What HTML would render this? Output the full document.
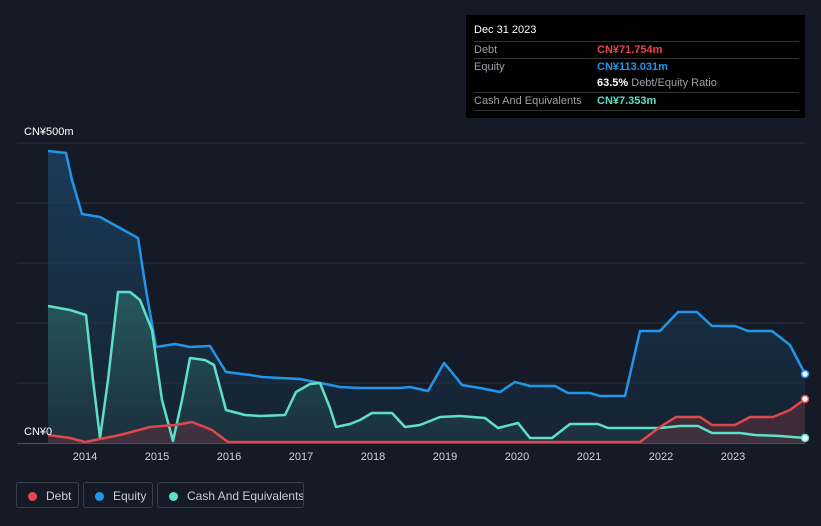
<!DOCTYPE html>
<html><head><meta charset="utf-8"><style>
body{margin:0;background:#151b26;width:821px;height:526px;overflow:hidden;font-family:"Liberation Sans",sans-serif;position:relative}
.tip{position:absolute;left:466px;top:15px;width:339px;height:103px;background:#000;color:#fff;font-size:11px}
.tip .r{position:absolute;left:8px;right:6px;border-top:1px solid #333;height:17px;line-height:17px;color:#9aa0a6}
.tip .v{position:absolute;left:123px;font-weight:bold}
.leg{position:absolute;top:482px;height:26px;border:1px solid #3a404a;border-radius:3px;color:#c8ccd2;font-size:12px;line-height:26px;box-sizing:border-box;white-space:nowrap;overflow:hidden}
.leg i{display:inline-block;width:9px;height:9px;border-radius:50%;margin:0 9px 0 11px;vertical-align:-1px}
</style></head><body>
<svg width="821" height="526" style="position:absolute;left:0;top:0">
<defs>
<linearGradient id="ge" x1="0" y1="0" x2="0" y2="1"><stop offset="0" stop-color="#1b4466" stop-opacity=".8"/><stop offset="1" stop-color="#16283a" stop-opacity=".6"/></linearGradient>
<linearGradient id="gc" x1="0" y1="0" x2="0" y2="1"><stop offset="0" stop-color="#2e6a6a" stop-opacity=".7"/><stop offset="1" stop-color="#1e3a44" stop-opacity=".6"/></linearGradient>
</defs>
<g stroke="#2a313c" stroke-width="1">
<line x1="17" y1="143" x2="805" y2="143"/><line x1="17" y1="203" x2="805" y2="203"/><line x1="17" y1="263" x2="805" y2="263"/><line x1="17" y1="323" x2="805" y2="323"/><line x1="17" y1="383" x2="805" y2="383"/>
</g>
<polygon fill="url(#ge)" points="48,443 48,151 66,153 72,180 82,214 100,217 120,228 138,238 146,290 156,347 175,344 190,347 210,346 226,372 250,375 262,377 300,379 320,383 340,387 360,388 400,388 410,387 428,391 444,363 450,370 462,385 480,388 500,392 515,382 530,386 555,386 568,393 590,393 600,396 625,396 640,331 660,331 678,312 697,312 712,326 735,326 748,331 772,331 790,345 805,374 805,443"/>
<polygon fill="url(#gc)" points="48,443 48,306 70,310 86,315 93,380 100,438 108,380 118,292 130,292 140,300 152,330 162,400 173,441 182,400 190,358 205,360 214,365 226,410 245,415 260,416 285,415 296,392 310,384 320,383 330,408 336,427 350,424 360,420 372,413 392,413 405,427 420,425 440,417 460,416 485,418 498,428 518,423 530,438 552,438 570,424 598,424 608,428 640,428 660,428 680,426 698,426 712,433 740,433 755,435 780,436 805,438 805,443"/>
<polygon fill="#5a3040" opacity=".6" points="48,443 48,435 70,438 85,442 100,439 120,435 150,427 175,425 192,422 212,430 228,442 640,442 660,427 676,417 700,417 712,425 735,425 750,417 773,417 790,410 805,399 805,443"/>
<polyline fill="none" stroke="#2196e8" stroke-width="2.5" stroke-linejoin="round" points="48,151 66,153 72,180 82,214 100,217 120,228 138,238 146,290 156,347 175,344 190,347 210,346 226,372 250,375 262,377 300,379 320,383 340,387 360,388 400,388 410,387 428,391 444,363 450,370 462,385 480,388 500,392 515,382 530,386 555,386 568,393 590,393 600,396 625,396 640,331 660,331 678,312 697,312 712,326 735,326 748,331 772,331 790,345 805,374"/>
<polyline fill="none" stroke="#5ee0c8" stroke-width="2.5" stroke-linejoin="round" points="48,306 70,310 86,315 93,380 100,438 108,380 118,292 130,292 140,300 152,330 162,400 173,441 182,400 190,358 205,360 214,365 226,410 245,415 260,416 285,415 296,392 310,384 320,383 330,408 336,427 350,424 360,420 372,413 392,413 405,427 420,425 440,417 460,416 485,418 498,428 518,423 530,438 552,438 570,424 598,424 608,428 640,428 660,428 680,426 698,426 712,433 740,433 755,435 780,436 805,438"/>
<polyline fill="none" stroke="#e0474c" stroke-width="2.5" stroke-linejoin="round" points="48,435 70,438 85,442 100,439 120,435 150,427 175,425 192,422 212,430 228,442 640,442 660,427 676,417 700,417 712,425 735,425 750,417 773,417 790,410 805,399"/>
<line x1="17" y1="443.5" x2="805" y2="443.5" stroke="#4a5260"/>
<circle cx="805" cy="374" r="3.5" fill="#fff" stroke="#2196e8" stroke-width="1.5"/>
<circle cx="805" cy="399" r="3.5" fill="#fff" stroke="#e0474c" stroke-width="1.5"/>
<circle cx="805" cy="438" r="3.5" fill="#fff" stroke="#5ee0c8" stroke-width="1.5"/>
<g fill="#fff" font-size="11" font-family="Liberation Sans,sans-serif">
<text x="24" y="135">CN¥500m</text><text x="24" y="435">CN¥0</text>
</g>
<g fill="#d0d4da" font-size="11" text-anchor="middle" font-family="Liberation Sans,sans-serif">
<text x="85" y="460">2014</text><text x="157" y="460">2015</text><text x="229" y="460">2016</text><text x="301" y="460">2017</text><text x="373" y="460">2018</text><text x="445" y="460">2019</text><text x="517" y="460">2020</text><text x="589" y="460">2021</text><text x="661" y="460">2022</text><text x="733" y="460">2023</text>
</g>
</svg>
<div class="tip">
<div style="position:absolute;left:8px;top:9px;font-size:11px">Dec 31 2023</div>
<div class="r" style="top:26px">Debt<span class="v" style="color:#e5484d">CN¥71.754m</span></div>
<div class="r" style="top:43px">Equity<span class="v" style="color:#2196e8">CN¥113.031m</span></div>
<div class="r" style="top:60px;border-top:none"><span class="v" style="color:#fff">63.5% <span style="color:#9aa0a6;font-weight:normal">Debt/Equity Ratio</span></span></div>
<div class="r" style="top:77px">Cash And Equivalents<span class="v" style="color:#5ee0c8">CN¥7.353m</span></div>
<div class="r" style="top:95px;height:0"></div>
</div>
<div class="leg" style="left:16px;width:63px"><i style="background:#e5484d"></i>Debt</div>
<div class="leg" style="left:83px;width:70px"><i style="background:#2196e8"></i>Equity</div>
<div class="leg" style="left:157px;width:147px"><i style="background:#5ee0c8"></i>Cash And Equivalents</div>
</body></html>
